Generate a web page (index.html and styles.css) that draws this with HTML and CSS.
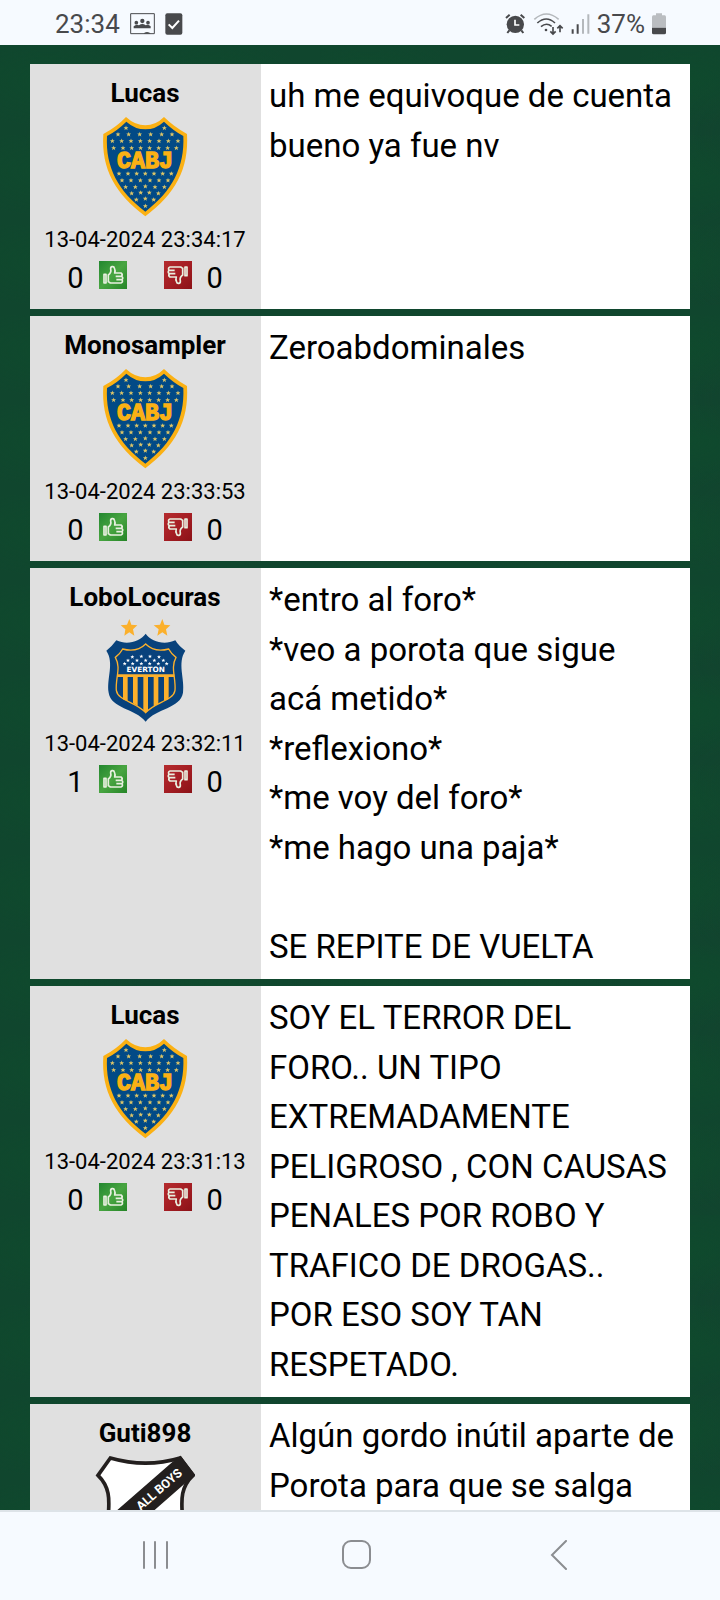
FILE: index.html
```html
<!DOCTYPE html>
<html lang="es">
<head>
<meta charset="utf-8">
<meta name="viewport" content="width=device-width, initial-scale=1">
<title>Foro</title>
<link rel="stylesheet" href="styles.css">
</head>
<body>
<svg class="sprites" aria-hidden="true">
  <defs>
    <marker id="star" viewBox="-10 -10 20 20" markerWidth="16" markerHeight="16" markerUnits="userSpaceOnUse">
      <path fill="#dcc568" d="M0-9 2.400-3 9-3 4 1.500 6 8 0 4-6 8-4 1.500-9-3-2.400-3z"/>
    </marker>
    <marker id="star-white" viewBox="-10 -10 20 20" markerWidth="13" markerHeight="13" markerUnits="userSpaceOnUse">
      <path fill="#fff" d="M0-9 2.400-3 9-3 4 1.500 6 8 0 4-6 8-4 1.500-9-3-2.400-3z"/>
    </marker>
    <symbol id="boca" viewBox="0 15 300 312">
      <path fill="#fbb114" d="M93 21Q120 46 151 46T207 21Q238 51 276 72C282 178 240 252 151 319C62 252 18 178 25 72Q65 51 93 21z"/>
      <path fill="#024a86" d="M94 35Q120 58 151 58T207 35Q235 62 265 78C269 172 231 244 151 305C70 244 31 172 36 78Q67 62 94 35z"/>
      <path class="star-field" d="M93 54L208 54L69 73L101 73L134 73L167 73L200 73L231 73L52 93L80 93L108 93L136 93L164 93L192 93L220 93L249 93L56 114L84 114L110 114L137 114L164 114L191 114L218 114L244 114L72 191L99 191L125 191L151 191L177 191L203 191L229 191L81 211L108 211L136 211L165 211L192 211L219 211L92 231L121 231L151 229L180 231L208 231L110 250L137 248L163 248L190 250L124 269L151 266L176 269L151 288"/>
      <text class="boca-text" x="150" y="175">CABJ</text>
    </symbol>
    <symbol id="everton" viewBox="0 27 300 312">
      <path fill="#fbb02c" d="M103 27 109 44 127 46 114 58 118 77 103 67 88 77 91 58 77 46 96 44zM202 27 208 44 226 46 213 58 217 77 202 67 187 77 191 58 176 46 195 44z"/>
      <path fill="#08427c" d="M152 71C169 94 206 107 241 91Q251 108 271 122C246 160 270 205 264 248C256 296 184 294 152 335C120 294 48 296 41 248C34 205 59 160 34 122Q52 108 64 91C98 107 134 94 152 71z"/>
      <path fill="none" stroke="#fbb02c" stroke-width="4" d="M152 102C168 118 192 125 221 117Q229 132 243 142C226 173 243 203 240 241C235 273 181 275 152 308C123 275 69 273 64 241C61 203 79 173 61 142Q75 132 83 117C112 125 136 118 152 102z"/>
      <path fill="#fbb02c" d="M66 193h172v8H66zM84 197h14v77l-14-6zM114 197h14v91l-14-8zM145 197h14v106l-7 6-7-7zM176 197h14v84l-14 9zM207 197h14v70l-14 7z"/>
      <path class="white-stars" d="M139 139L165 139L112 141L192 141L99 151L126 151L152 151L178 151L205 151L89 161L113 161L139 161L164 161L190 161L215 161"/>
      <text class="everton-text" x="152" y="187">EVERTON</text>
    </symbol>
    <symbol id="allboys" viewBox="195 198 300 312">
      <path fill="#fff" stroke="#231f1e" stroke-width="11" d="M241 207Q348 238 450 207L489 259C435 310 465 370 455 415C445 460 390 480 346 500C302 480 247 460 237 415C227 370 257 310 204 259z"/>
      <path fill="#231f1e" d="M452 200 428 218 238 384 350 384 463 285 497 259z"/>
      <text class="allboys-text" transform="translate(332 366) rotate(-41)">ALL BOYS</text>
    </symbol>
    <symbol id="hand" viewBox="0 0 84 84">
      <path fill="none" stroke="#e9f0e0" stroke-width="5" stroke-linejoin="round" d="M15 40h6v26h-6zM28 64V42Q38 35 35 24C34 15 45 15 46 21Q50 29 47 36H66Q72 40 68 46Q74 50 69 56Q73 64 66 66H34L28 62M50 46H67M52 56H68"/>
    </symbol>
  </defs>
</svg>

<header class="status">
  <div class="status-group status-left">
    <span>23:34</span>
    <svg width="25" height="22" viewBox="390 41 75 66" aria-hidden="true"><path fill="none" stroke="#48494c" stroke-width="3" d="M392 43h71v60h-71z"/><g fill="#48494c"><circle cx="427" cy="65" r="6.500"/><circle cx="409" cy="70" r="5.500"/><circle cx="444" cy="70" r="5.500"/><path d="M401 87v-6q8-8 16-3 10-8 20 0 8-5 15 3v6zM431 103q2-5 10-5t11 5z"/></g></svg>
    <svg width="18" height="22" viewBox="494 39 54 66" aria-hidden="true"><rect x="495" y="40" width="51" height="64" rx="6" fill="#48494c"/><path d="M505 73l11 11 20-22" fill="none" stroke="#fff" stroke-width="6"/></svg>
  </div>
  <div class="status-group status-right">
    <svg width="21" height="22" viewBox="435 40 63 66" aria-hidden="true"><circle cx="466" cy="74" r="26" fill="#48494c"/><path d="M438 55l11-10M482 45l11 10M448 92l-6 8M484 92l6 8" stroke="#48494c" stroke-width="6"/><path d="M465 60v16h13" fill="none" stroke="#fff" stroke-width="5"/></svg>
    <svg width="31" height="24" viewBox="522 36 93 72" aria-hidden="true"><g fill="none" stroke="#48494c" stroke-width="5"><path stroke="#b4b8bc" d="M526 58Q562 26 599 58"/><path d="M535 69Q562 45 588 69M546 80Q562 66 578 79M582 81v21M574 94l8 8 8-8M603 97V78M595 85l8-8 8 8"/></g><circle cx="561" cy="90" r="4" fill="#48494c"/></svg>
    <svg width="19" height="20" viewBox="630 42 57 60" aria-hidden="true"><path stroke="#48494c" stroke-width="6" d="M635 88v13M650 73v28"/><path stroke="#b4b8bc" stroke-width="6" d="M666 57v44M682 43v58"/></svg>
    <span>37%</span>
    <svg width="14" height="22" viewBox="873 40 42 66" aria-hidden="true"><path fill="#babdc1" d="M885 41h18v6h8q4 0 4 5v32h-42V52q0-5 4-5h8z"/><path fill="#48494c" d="M873 84h42v15q0 5-5 5h-32q-5 0-5-5z"/></svg>
  </div>
</header>

<main class="forum">
  <article class="post">
    <aside class="author">
      <h2 class="name">Lucas</h2>
      <svg class="crest" role="img" aria-label="Boca Juniors"><use href="#boca"/></svg>
      <time class="date">13-04-2024 23:34:17</time>
      <div class="votes"><span class="count">0</span><button class="vote up" aria-label="Me gusta"><svg><use href="#hand"/></svg></button><button class="vote down" aria-label="No me gusta"><svg><use href="#hand"/></svg></button><span class="count">0</span></div>
    </aside>
    <p class="message">uh me equivoque de cuenta bueno ya fue nv</p>
  </article>
  <article class="post">
    <aside class="author">
      <h2 class="name">Monosampler</h2>
      <svg class="crest" role="img" aria-label="Boca Juniors"><use href="#boca"/></svg>
      <time class="date">13-04-2024 23:33:53</time>
      <div class="votes"><span class="count">0</span><button class="vote up" aria-label="Me gusta"><svg><use href="#hand"/></svg></button><button class="vote down" aria-label="No me gusta"><svg><use href="#hand"/></svg></button><span class="count">0</span></div>
    </aside>
    <p class="message">Zeroabdominales</p>
  </article>
  <article class="post">
    <aside class="author">
      <h2 class="name">LoboLocuras</h2>
      <svg class="crest" role="img" aria-label="Everton"><use href="#everton"/></svg>
      <time class="date">13-04-2024 23:32:11</time>
      <div class="votes"><span class="count">1</span><button class="vote up" aria-label="Me gusta"><svg><use href="#hand"/></svg></button><button class="vote down" aria-label="No me gusta"><svg><use href="#hand"/></svg></button><span class="count">0</span></div>
    </aside>
    <p class="message">*entro al foro*<br>*veo a porota que sigue acá metido*<br>*reflexiono*<br>*me voy del foro*<br>*me hago una paja*<br><br>SE REPITE DE VUELTA</p>
  </article>
  <article class="post">
    <aside class="author">
      <h2 class="name">Lucas</h2>
      <svg class="crest" role="img" aria-label="Boca Juniors"><use href="#boca"/></svg>
      <time class="date">13-04-2024 23:31:13</time>
      <div class="votes"><span class="count">0</span><button class="vote up" aria-label="Me gusta"><svg><use href="#hand"/></svg></button><button class="vote down" aria-label="No me gusta"><svg><use href="#hand"/></svg></button><span class="count">0</span></div>
    </aside>
    <p class="message">SOY EL TERROR DEL FORO.. UN TIPO EXTREMADAMENTE PELIGROSO , CON CAUSAS PENALES POR ROBO Y TRAFICO DE DROGAS.. POR ESO SOY TAN RESPETADO.</p>
  </article>
  <article class="post">
    <aside class="author">
      <h2 class="name">Guti898</h2>
      <svg class="crest" role="img" aria-label="All Boys"><use href="#allboys"/></svg>
    </aside>
    <p class="message">Algún gordo inútil aparte de Porota para que se salga</p>
  </article>
</main>

<nav class="navbar" aria-label="Sistema">
  <button class="nav-button" aria-label="Recientes"><svg width="30" height="30" viewBox="0 0 30 30"><path d="M4 2v26M15 2v26M27 2v26"/></svg></button>
  <button class="nav-button" aria-label="Inicio"><svg width="30" height="30" viewBox="0 0 30 30"><rect x="1" y="1" width="27" height="27" rx="8"/></svg></button>
  <button class="nav-button" aria-label="Atrás"><svg width="30" height="30" viewBox="0 0 30 30"><path d="M22 1L8 15l14 14"/></svg></button>
</nav>
</body>
</html>
```

FILE: styles.css
```css
* {
  box-sizing: border-box;
}

body {
  margin: 0;
  height: 100vh;
  display: flex;
  flex-direction: column;
  font-family: Roboto, "Liberation Sans", sans-serif;
  color: #000;
  background: #10462e;
}

button {
  margin: 0;
  padding: 0;
  border: 0;
  background: none;
}

.sprites {
  position: absolute;
  width: 0;
  height: 0;
}

.status {
  flex: none;
  height: 45px;
  padding: 3px 54px 0 55px;
  display: flex;
  justify-content: space-between;
  align-items: center;
  background: #f6faff;
  color: #48494c;
  font-size: 26px;
}

.status-group {
  display: flex;
  align-items: center;
}

.status-left {
  gap: 10px;
}

.status-right {
  gap: 7px;
}

.forum {
  flex: 1;
  min-height: 0;
  overflow: hidden;
  padding: 19px 30px 0;
  background-color: #10462e;
  background-image:
    radial-gradient(ellipse at 30% 40%, rgba(14, 76, 44, 0.6), transparent 60%),
    radial-gradient(ellipse at 75% 70%, rgba(22, 62, 48, 0.5), transparent 60%);
  background-size: 160px 90px, 210px 130px;
}

.post {
  display: grid;
  grid-template-columns: 35% 1fr;
  margin-bottom: 7px;
  background: #fff;
}

.author {
  display: flex;
  flex-direction: column;
  align-items: center;
  padding: 7px 1px 20px 0;
  background: #e0e0e0;
}

.name {
  margin: 0;
  font-size: 26px;
  line-height: 44px;
  font-weight: 700;
}

.crest {
  width: 100px;
  height: 104px;
}

.date {
  font-size: 22px;
  line-height: 42px;
  white-space: nowrap;
}

.votes {
  display: flex;
  align-items: center;
  height: 28px;
  font-size: 29px;
  line-height: 28px;
}

.count {
  padding-top: 6px;
}

.vote {
  width: 28px;
  height: 28px;
}

.vote svg {
  display: block;
  width: 28px;
  height: 28px;
}

.up {
  margin: 0 18px 0 15px;
  background: linear-gradient(135deg, #23872f, #48a541 50%, #258527);
}

.down {
  margin: 0 15px 0 19px;
  background: linear-gradient(135deg, #b52c2e, #a51e24 50%, #8b1217);
}

.down svg {
  transform: rotate(180deg);
}

.message {
  margin: 0;
  padding: 7px 15px 8px 8px;
  font-size: 33px;
  line-height: 1.5;
}

.star-field {
  fill: none;
  marker: url(#star);
}

.white-stars {
  fill: none;
  marker: url(#star-white);
}

.boca-text {
  font: bold 70px "Liberation Mono", monospace;
  fill: #fbb114;
  stroke: #fbb114;
  stroke-width: 4;
  text-anchor: middle;
}

.everton-text {
  font: bold 22px "DejaVu Sans", sans-serif;
  fill: #fff;
  text-anchor: middle;
}

.allboys-text {
  font: bold 37px Roboto, sans-serif;
  fill: #fff;
}

.navbar {
  flex: none;
  height: 90px;
  padding: 0 60px 2px 54px;
  display: grid;
  grid-template-columns: repeat(3, 1fr);
  border-top: 2px solid #dde3e8;
  background: #f6faff;
}

.nav-button {
  display: flex;
  align-items: center;
  justify-content: center;
}

.nav-button svg {
  fill: none;
  stroke: #8b8d91;
  stroke-width: 2;
  stroke-linecap: round;
}
```
